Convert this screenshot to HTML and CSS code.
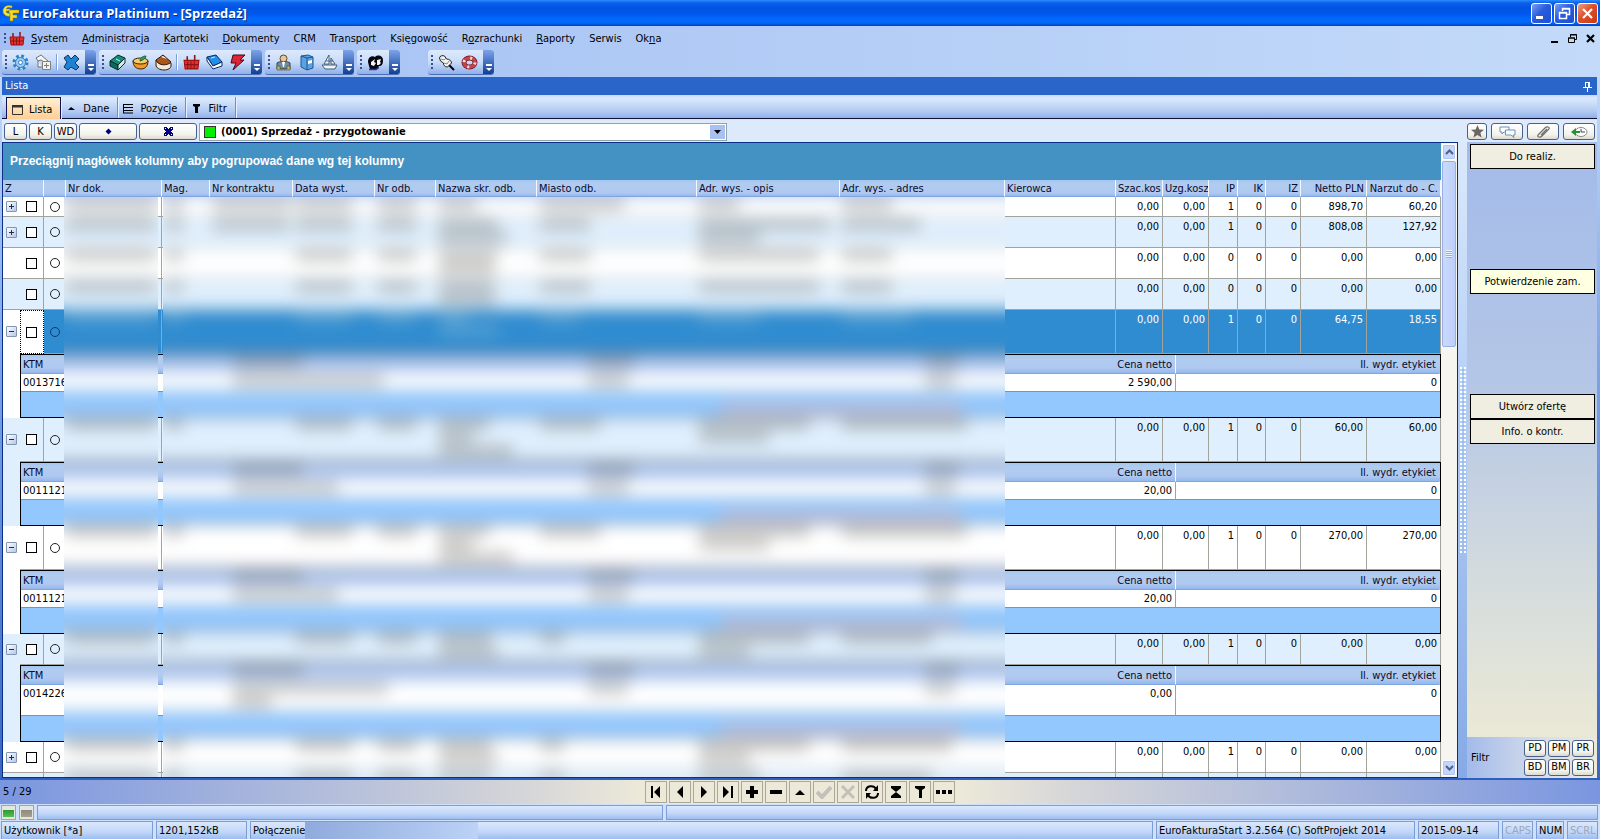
FILE: index.html
```html
<!DOCTYPE html>
<html lang="pl">
<head>
<meta charset="utf-8">
<title>EuroFaktura Platinium - [Sprzedaż]</title>
<link rel="stylesheet" href="styles.css">
</head>
<body>
<div class="app">
  <header class="titlebar">
    <svg class="logo" width="18" height="18" viewBox="0 0 18 18"><path d="M10 2C4 0 1 4 1 7s3 6 7 5v-3C5 10 4 8 4 7h4V5H4c1-2 3-2 6-1z" fill="#f4e53a" stroke="#a89a10" stroke-width=".6"/><path d="M7 6h10v3h-6v2h4v3h-4v3H8V9H7z" fill="#ffd91e" stroke="#8f8410" stroke-width=".6"/></svg>
    <h1>EuroFaktura Platinium - [Sprzedaż]</h1>
    <div class="win-buttons">
      <button class="win" aria-label="Minimalizuj"><svg width="19" height="19"><path d="M4 12h7v3H4z" fill="#fff"/></svg></button>
      <button class="win" aria-label="Przywróć"><svg width="19" height="19"><path d="M7.500 7V4.500h7v6H12M7 5h8M4.500 8.500h7v6h-7zM4 9h8" fill="none" stroke="#fff" stroke-width="1.500"/></svg></button>
      <button class="win close" aria-label="Zamknij"><svg width="19" height="19"><path d="M5 5l9 9M14 5l-9 9" stroke="#fff" stroke-width="2.200"/></svg></button>
    </div>
  </header>

  <div class="bars">
    <nav class="menubar">
      <span class="grip"></span>
      <svg class="ico" width="16" height="16"><use href="#i-basket"/></svg>
      <a href="#"><u>S</u>ystem</a><a href="#"><u>A</u>dministracja</a><a href="#"><u>K</u>artoteki</a><a href="#"><u>D</u>okumenty</a><a href="#">CRM</a><a href="#">Transport</a><a href="#">Księ<u>g</u>owość</a><a href="#">R<u>o</u>zrachunki</a><a href="#"><u>R</u>aporty</a><a href="#">Serwis</a><a href="#">Ok<u>n</u>a</a>
      <div class="mdi">
        <button aria-label="Minimalizuj okno"><svg width="11" height="11"><path d="M2 8h7v2H2z"/></svg></button>
        <button aria-label="Przywróć okno"><svg width="11" height="11"><path d="M3.500 4V1.500h6v5H8M3 2h7M1.500 5v4.500h6V5zM1 5h7" fill="none" stroke="#000"/></svg></button>
        <button aria-label="Zamknij okno"><svg width="11" height="11"><path d="M2 2l7 7M9 2L2 9" stroke="#000" stroke-width="2.200"/></svg></button>
      </div>
    </nav>

    <div class="toolbars">
      <div class="toolbar">
        <span class="grip"></span>
        <button aria-label="Ustawienia"><svg width="17" height="17"><circle cx="8.500" cy="8.500" r="6.500" fill="#bfe0fb" stroke="#2f7fc8" stroke-width="3" stroke-dasharray="2.600 2.500"/><circle cx="8.500" cy="8.500" r="5" fill="#9accf4" stroke="#2f7fc8"/><circle cx="8.500" cy="8.500" r="2" fill="#fff" stroke="#2f7fc8"/></svg></button>
        <button aria-label="Moduły"><svg width="17" height="17"><path d="M1 4l5-3 7 6-2 2-5-3-3 1zM3 7v6h4" fill="#f4f4f4" stroke="#68737c"/><path d="M7.500 7.500h8v8h-8z" fill="#f6f4ea" stroke="#7a7f84"/><path d="M11.500 9v5M9 11.500h5" stroke="#7a7f84"/></svg></button>
        <span class="sep"></span>
        <button aria-label="Zamknij listę"><svg width="17" height="17"><path d="M1 4l4-3 3 4 4-4 4 4-4 4 4 4-3 3-5-3-3 3-4-3 3-5z" fill="#1b84d6" stroke="#12305c"/></svg></button>
        <span class="cap"></span>
      </div>
      <div class="toolbar">
        <span class="grip"></span>
        <button aria-label="Księga"><svg width="17" height="17"><path d="M1 7l8-6 7 3-7 7z" fill="#17887a" stroke="#04322c"/><path d="M1 7v5l8 4V11z" fill="#0f6a5e" stroke="#04322c"/><path d="M9 16l7-7V4l-7 7z" fill="#d8e8e0" stroke="#04322c"/><path d="M7 5l4 2" stroke="#bfe"/></svg></button>
        <button aria-label="Towary"><svg width="17" height="17"><path d="M1 7c0 5 3 8 8 8s7-4 7-8z" fill="#f09a28" stroke="#3a2200"/><ellipse cx="8.500" cy="7" rx="7.500" ry="3" fill="#f7c968" stroke="#3a2200"/><path d="M8 7c0-4 4-5 6-5-1 3-3 4-6 5z" fill="#3ea03e" stroke="#163"/></svg></button>
        <button aria-label="Magazyn"><svg width="17" height="17"><path d="M1 6v5c0 3 4 5 8 5s7-2 7-4V9z" fill="#f5ead6" stroke="#2b1a0c"/><path d="M1 6l7-5 8 7c-3 4-13 4-15-2z" fill="#a8581c" stroke="#2b1a0c"/><path d="M6 3l2-1 4 3z" fill="#fff"/></svg></button>
        <span class="sep"></span>
        <button aria-label="Sprzedaż"><svg width="17" height="17"><use href="#i-basket"/></svg></button>
        <button aria-label="Zakupy"><svg width="17" height="17"><path d="M1 3l9-2 6 7-9 4z" fill="#1f8fe8" stroke="#08286a"/><path d="M1 3v4l6 8 9-3V8l-9 4z" fill="#fff" stroke="#08286a"/><path d="M5 4l4-1" stroke="#cdf"/></svg></button>
        <button aria-label="Szybkie akcje"><svg width="17" height="17"><path d="M4 1h12l-5 5h4L4 16l3-7H2z" fill="#e02236" stroke="#3c0a20"/></svg></button>
        <span class="cap"></span>
      </div>
      <div class="toolbar">
        <span class="grip"></span>
        <button aria-label="Kontrahenci"><svg width="17" height="17"><path d="M2 15V9c2-2 11-2 13 0v6z" fill="#6a8fa8" stroke="#33414c"/><path d="M2 12h3v3h7v-3h3v4H2z" fill="#c8b46c" stroke="#5d532c" stroke-width=".7"/><circle cx="8.500" cy="4.500" r="3.500" fill="#e8c79c" stroke="#5b4a36"/><path d="M7 8h3l-1 5H8z" fill="#fff"/></svg></button>
        <button aria-label="Kartoteka"><svg width="17" height="17"><path d="M3 2l7-1 5 2v11l-6 2-6-3z" fill="#5aa2e0" stroke="#1c5792"/><path d="M3 2l6 2v12M9 4l6-1" fill="none" stroke="#1c5792"/><path d="M10 7l4-1v3l-4 1z" fill="#fff"/></svg></button>
        <button aria-label="Spedycja"><svg width="17" height="17"><path d="M1 11h15l-2 4H4z" fill="#eef4fa" stroke="#3f5f78"/><path d="M8 1v9H3zM10 4v6h4z" fill="#fff" stroke="#4b5f70"/><path d="M5 7h7" stroke="#2b6aa8"/></svg></button>
        <span class="cap"></span>
      </div>
      <div class="toolbar">
        <span class="grip"></span>
        <button aria-label="Pracownicy"><svg width="17" height="17"><path d="M1 8c0-5 4-7 7-5 3-3 8-1 8 3 0 4-1 6-4 6l-2 3H3l-1-3z" fill="#05070f"/><path d="M4 8l4-3-1 3 2 1-2 3-3-1zM10 6l4-1-1 3 1 1-2 2h-2z" fill="#f4f4f4"/><path d="M2 15.500h7l3-2" stroke="#2233a8" stroke-width="1.500" fill="none"/></svg></button>
        <span class="cap"></span>
      </div>
      <div class="toolbar detached">
        <span class="grip"></span>
        <button aria-label="Przypnij"><svg width="17" height="17"><path d="M10 10l6 6" stroke="#000" stroke-width="2"/><path d="M1.500 4c0-2 3-3 5-2l2 3c3 0 5 2 5 4l-4 4c-3 0-4-2-4-4L2.500 7z" fill="#f4f4f0" stroke="#222"/><path d="M3 5l3 1 2-2M6 9l3 1 2-3" stroke="#888" fill="none"/></svg></button>
        <button aria-label="Pomoc"><svg width="17" height="17"><ellipse cx="8.500" cy="8.500" rx="5.500" ry="4.500" fill="none" stroke="#6a1c24" stroke-width="5"/><ellipse cx="8.500" cy="8.500" rx="5.500" ry="4.500" fill="none" stroke="#c9414c" stroke-width="3.500"/><ellipse cx="8.500" cy="8.500" rx="5.500" ry="4.500" fill="none" stroke="#f8d8d8" stroke-width="3" stroke-dasharray="2 5.900"/></svg></button>
        <span class="cap"></span>
      </div>
    </div>
  </div>

  <div class="frame">
    <div class="panel-title"><span>Lista</span>
      <button aria-label="Przypnij panel"><svg width="9" height="11"><path d="M2.500 1v5M6.500 1v5M2 1.500h5M5.500 1v5M0 6.500h9M4.500 7v4" stroke="#fff" fill="none"/></svg></button>
    </div>

    <nav class="tabs">
      <button class="tab active"><svg width="11" height="11"><path d="M.5 1.500h10v9H.5z" fill="none" stroke="#333"/><path d="M0 1h11v2.500H0z" fill="#333"/></svg>Lista</button>
      <button class="tab"><svg width="11" height="11"><path d="M2 7l3-3 4 3z"/></svg>Dane</button>
      <button class="tab"><svg width="11" height="11"><path d="M0 1.500h10M0 4.500h10M0 7.500h10M0 10h10M.5 1v9" stroke="#000"/></svg>Pozycje</button>
      <button class="tab"><svg width="11" height="11"><path d="M2 1h7v2L7 4v6H4V4L2 3z"/></svg>Filtr</button>
    </nav>

    <div class="controls">
      <button class="pill small">L</button><button class="pill small">K</button><button class="pill small">WD</button>
      <button class="pill wide" aria-label="Punkt"><svg width="9" height="9"><path d="M4.500 1.500l3 3-3 3-3-3z" fill="#00007c"/></svg></button>
      <button class="pill wide" aria-label="Rozwiń"><svg width="11" height="11" shape-rendering="crispEdges"><path d="M1 1h3v1h1v1h1V2h1V1h3v3H9v1H8v1h1v1h1v3H7V9H6V8H5v1H4v1H1V7h1V6h1V5H2V4H1z" fill="#00007c"/><path d="M2 2h1v1H2zM8 2h1v1H8zM2 8h1v1H2zM8 8h1v1H8z" fill="#fff"/></svg></button>
      <label class="combo"><span class="swatch"></span>
        <select aria-label="Rejestr"><option>(0001) Sprzedaż - przygotowanie</option></select>
        <span class="drop"><svg width="7" height="4"><path d="M0 0h7L3.500 4z"/></svg></span>
      </label>
      <div class="side-tools">
        <button class="pill star" aria-label="Ulubione"><svg width="13" height="13"><path d="M6.500 0l1.800 4.400 4.700.3-3.600 3 1.200 4.800-4.100-2.600-4.100 2.600 1.200-4.800L0 4.700l4.700-.3z" fill="#6b6663"/></svg></button>
        <button class="pill" aria-label="Komentarze"><svg width="17" height="12"><path d="M1 1h9v5H5L3 8V6H1z" fill="#fff" stroke="#6d8fc0"/><path d="M6.500 4h9.500v5h-2l1 2.500L12 9H6.500z" fill="#fff" stroke="#6d8fc0"/></svg></button>
        <button class="pill" aria-label="Załączniki"><svg width="15" height="12"><path d="M2 9l7-7c2-2 5-1 4 1l-7 7c-2 2-5 1-4-1zM5 9l6-6" fill="none" stroke="#6d6d6d" stroke-width="1.200"/></svg></button>
        <button class="pill" aria-label="Historia"><svg width="17" height="12"><ellipse cx="10" cy="6" rx="6" ry="4.500" fill="#fff" stroke="#8a8a8a"/><path d="M10 3v3h4" fill="none" stroke="#444"/><path d="M0 6l5-4v3h4v2H5v3z" fill="#1e9632"/></svg></button>
      </div>
    </div>

    <main class="work">
      <section class="grid">
        <div class="grid-main">
          <div class="group-panel">Przeciągnij nagłówek kolumny aby pogrupować dane wg tej kolumny</div>
          <div class="grid-scroll">
            <table class="data" id="orders">
              <colgroup><col class="w17"><col class="w24"><col class="w22"><col class="w96"><col class="w48"><col class="w83"><col class="w82"><col class="w61"><col class="w101"><col><col class="w143"><col class="w165"><col class="w111"><col class="w47"><col class="w46"><col class="w29"><col class="w28"><col class="w35"><col class="w66"><col class="w74"></colgroup>
              <thead><tr><th colspan="2">Z</th><th></th><th>Nr dok.</th><th>Mag.</th><th>Nr kontraktu</th><th>Data wyst.</th><th>Nr odb.</th><th>Nazwa skr. odb.</th><th>Miasto odb.</th><th>Adr. wys. - opis</th><th>Adr. wys. - adres</th><th>Kierowca</th><th class="n">Szac.kos</th><th>Uzg.kosz</th><th class="n">IP</th><th class="n">IK</th><th class="n">IZ</th><th class="n">Netto PLN</th><th class="n">Narzut do - C.</th></tr></thead>
              <tbody></tbody>
            </table>
            <div class="veil veil-doc" aria-hidden="true"><div class="smear"></div></div>
            <div class="veil veil-rest" aria-hidden="true"><div class="smear"></div></div>
          </div>
        </div>
        <div class="scrollbar">
          <button aria-label="W górę"><svg width="9" height="6"><path d="M1 5l3.500-3.500L8 5" fill="none" stroke="#4d6185" stroke-width="2"/></svg></button>
          <div class="track"><div class="thumb"><span></span></div></div>
          <button aria-label="W dół"><svg width="9" height="6"><path d="M1 1l3.500 3.500L8 1" fill="none" stroke="#4d6185" stroke-width="2"/></svg></button>
        </div>
      </section>
      <div class="splitter"><span></span></div>
      <aside class="side">
        <div class="actions">
          <button>Do realiz.</button>
          <button class="hot">Potwierdzenie zam.</button>
          <button class="offer">Utwórz ofertę</button>
          <button class="info">Info. o kontr.</button>
        </div>
        <div class="filters"><span>Filtr</span>
          <div class="filter-keys"><button class="pill">PD</button><button class="pill">PM</button><button class="pill">PR</button><button class="pill">BD</button><button class="pill">BM</button><button class="pill">BR</button></div>
        </div>
      </aside>
    </main>
  </div>

  <div class="navigator">
    <span class="count">5 / 29</span>
    <div class="nav-keys">
      <button aria-label="Pierwszy"><svg width="14" height="14"><path d="M2 1h2v12H2zM11 1v12L5 7z"/></svg></button>
      <button aria-label="Poprzedni"><svg width="14" height="14"><path d="M10 1v12L4 7z"/></svg></button>
      <button aria-label="Następny"><svg width="14" height="14"><path d="M4 1v12l6-6z"/></svg></button>
      <button aria-label="Ostatni"><svg width="14" height="14"><path d="M10 1h2v12h-2zM2 1v12l6-6z"/></svg></button>
      <button aria-label="Dodaj"><svg width="14" height="14"><path d="M5 1h4v4h4v4H9v4H5V9H1V5h4z"/></svg></button>
      <button aria-label="Usuń"><svg width="14" height="14"><path d="M1 5h12v4H1z"/></svg></button>
      <button aria-label="Edytuj"><svg width="14" height="14"><path d="M2 10l5-5 5 5z"/></svg></button>
      <button aria-label="Zatwierdź" disabled><svg width="16" height="14"><path d="M1 7l5 5L15 2" fill="none" stroke="#c2c0b8" stroke-width="4"/></svg></button>
      <button aria-label="Anuluj" disabled><svg width="14" height="14"><path d="M1 1l12 12M13 1L1 13" stroke="#c2c0b8" stroke-width="3"/></svg></button>
      <button aria-label="Odśwież"><svg width="16" height="16"><path d="M2 7c0-6 8-6 10-2M14 9c0 6-8 6-10 2" fill="none" stroke="#000" stroke-width="2"/><path d="M14 1v6H9zM2 15V9h5z"/></svg></button>
      <button aria-label="Suma"><svg width="14" height="14"><path d="M2 1h10v2L7 7 2 3zM7 7l5 4v2H2v-2z"/></svg></button>
      <button aria-label="Filtruj"><svg width="14" height="14"><path d="M2 1h10v2L9 5v8H6V5L2 3z"/></svg></button>
      <button aria-label="Więcej"><svg width="16" height="14"><path d="M0 5h4v4H0zM6 5h4v4H6zM12 5h4v4h-4z"/></svg></button>
    </div>
  </div>

  <div class="progress">
    <span class="led on"></span><span class="led"></span><span class="cell p1"></span><span class="cell grow"></span>
  </div>
  <footer class="status">
    <span class="cell s1">Użytkownik [*a]</span><span class="cell s2">1201,152kB</span><span class="cell grow">Połączenie<i class="masked"></i></span><span class="cell s4">EuroFakturaStart 3.2.564 (C) SoftProjekt 2014</span><span class="cell s5">2015-09-14</span><span class="cell off s6">CAPS</span><span class="cell s7">NUM</span><span class="cell off s6">SCRL</span>
  </footer>
</div>

<svg class="defs" width="0" height="0"><symbol id="i-basket" viewBox="0 0 16 16"><path d="M4 7V2M11 7V1" stroke="#8c1414" stroke-width="1.500"/><path d="M1 6h14l-1 8H2z" fill="#e03030" stroke="#a01010"/><path d="M4.500 7v7M7.500 7v7M10.500 7v7M2 10h12" stroke="#8c1414"/></symbol></svg>
<script src="app.js"></script>
</body>
</html>
```

FILE: styles.css
```css
* { box-sizing: border-box; }

body {
  margin: 0;
  font: 11px/14px "DejaVu Sans Condensed", Tahoma, "Noto Sans", sans-serif;
  color: #000;
}

button {
  font: inherit;
  color: inherit;
  margin: 0;
  padding: 0;
  border: 0;
  background: none;
  display: flex;
  align-items: center;
  justify-content: center;
  white-space: nowrap;
}

svg { display: block; flex: none; }
.defs { position: absolute; }

.app {
  height: 100vh;
  display: flex;
  flex-direction: column;
  overflow: hidden;
  background: #c3daf9;
}

/* title bar */
.titlebar {
  flex: none;
  height: 26px;
  display: flex;
  align-items: center;
  padding: 0 2px;
  background: linear-gradient(#2b8cff 0, #0b5fe8 3px, #0054e3 8px, #0058ee 14px, #026bff 20px, #0066f5 23px, #0040c0 26px);
}
.logo { margin-right: 2px; }
.titlebar h1 {
  margin: 0;
  flex: 1;
  font: bold 13px/20px "Open Sans", "Trebuchet MS", sans-serif;
  color: #fff;
  text-shadow: 1px 1px 0 #0a2a80;
}
.win-buttons { display: flex; gap: 2px; }
.win {
  width: 21px;
  height: 21px;
  border: 1px solid #fff;
  border-radius: 3px;
  background: linear-gradient(135deg, #7ba0f4, #2a5bdc 45%, #1d4fd6);
}
.win.close { background: linear-gradient(135deg, #f0a08a, #dd4f2a 45%, #c43a14); }

/* menu and toolbars */
.bars { flex: none; background: linear-gradient(90deg, #a3bff3, #c3daf9); }
.menubar { height: 24px; display: flex; align-items: center; padding: 1px 4px 0; }
.menubar a { color: #000; text-decoration: none; margin-left: 14px; }
.menubar .ico { margin-left: 2px; }
.menubar .ico + a { margin-left: 6px; }
.mdi { margin-left: auto; display: flex; gap: 7px; }
.grip {
  flex: none;
  width: 3px;
  height: 15px;
  background: repeating-linear-gradient(#33528f 0 2px, transparent 2px 4px);
  background-size: 2px 100%;
  background-repeat: no-repeat;
}
.menubar .grip { height: 11px; }
.toolbars { display: flex; gap: 3px; height: 27px; padding: 0 3px 2px 2px; }
.toolbar {
  display: flex;
  align-items: center;
  padding-left: 3px;
  border-radius: 3px;
  background: linear-gradient(#dde9fc, #c9dcf8 50%, #8fb0e8);
  border-bottom: 1px solid #4a6fb8;
}
.toolbar.detached { margin-left: 25px; }
.toolbar .grip { margin-right: 1px; }
.toolbar button { width: 23px; height: 22px; }
.sep { width: 2px; height: 16px; margin: 0 2px 0 1px; background: #7d9fd8; border-right: 1px solid #fff; }
.cap {
  align-self: stretch;
  width: 11px;
  margin-left: 2px;
  border-radius: 0 3px 3px 0;
  background: linear-gradient(#7ba4ea, #123e94);
  display: flex;
  flex-direction: column;
  align-items: center;
  justify-content: flex-end;
  padding-bottom: 3px;
}
.cap::before { content: ""; width: 6px; height: 2px; background: #fff; margin-bottom: 2px; }
.cap::after { content: ""; border: 3px solid transparent; border-top-color: #fff; border-bottom: 0; }

/* document frame */
.frame {
  flex: 1;
  min-height: 0;
  display: flex;
  flex-direction: column;
  padding: 0 3px 0 2px;
  border-bottom: 2px solid #2c5fc0;
  background: linear-gradient(#c3daf9, #7ea5ea 40%, #3b66c4);
}
.panel-title {
  flex: none;
  height: 18px;
  display: flex;
  align-items: center;
  justify-content: space-between;
  padding: 0 5px 0 3px;
  background: #2a66c9;
  color: #fff;
}
.tabs {
  flex: none;
  height: 24px;
  display: flex;
  align-items: flex-end;
  padding-left: 4px;
  border-bottom: 1px solid #101030;
  background: linear-gradient(#c3daf9, #dbe9fd 3px, #b4cbf2 16px, #8fb1ea);
}
.tab {
  height: 21px;
  gap: 6px;
  padding: 2px 8px 0 5px;
  border-right: 1px solid #6e8fce;
  box-shadow: 1px 0 #e8f1ff;
}
.tab.active {
  border: 1px solid #101050;
  border-bottom: 0;
  background: linear-gradient(#fff0d4, #ffcf95);
  margin-bottom: -1px;
  height: 22px;
}
.controls {
  flex: none;
  height: 23px;
  display: flex;
  align-items: center;
  gap: 2px;
  padding: 1px 2px 0;
  border-top: 1px solid #f6dcd2;
  background: #dceafb;
}
.pill {
  height: 17px;
  border: 1px solid #47618a;
  border-radius: 3px;
  background: linear-gradient(#fff, #f3f3ec 70%, #dcdad0);
}
.pill.small { width: 23px; }
.pill.wide { width: 58px; }
.combo {
  flex: 0 1 528px;
  height: 18px;
  display: flex;
  align-items: center;
  padding: 1px 1px 1px 4px;
  border: 1px solid #8fa5a5;
  background: #fff;
}
.swatch { width: 12px; height: 12px; border: 1px solid #333; background: #00f000; }
.combo select {
  appearance: none;
  flex: 1;
  min-width: 0;
  border: 0;
  padding: 0 0 0 5px;
  background: none;
  font: bold 11px/14px "DejaVu Sans Condensed", Tahoma, "Noto Sans", sans-serif;
  color: #000;
}
.drop {
  width: 15px;
  height: 14px;
  display: flex;
  align-items: center;
  justify-content: center;
  background: #a9c1f0;
}
.side-tools { margin-left: auto; display: flex; gap: 4px; }
.side-tools .pill { width: 32px; }
.side-tools .star { width: 20px; }

/* work area */
.work { flex: 1; min-height: 0; display: flex; }
.grid {
  flex: 1;
  min-width: 0;
  display: flex;
  border: 1px solid #0a2f86;
  background: #fff;
}
.grid-main { flex: 1; min-width: 0; display: flex; flex-direction: column; }
.group-panel {
  flex: none;
  height: 37px;
  padding: 0 7px;
  background: #4492c4;
  color: #fff;
  font: bold 12px/37px "Liberation Sans", Arial, sans-serif;
}
.grid-scroll { position: relative; flex: 1; min-height: 0; overflow: hidden; }
table { border-collapse: separate; border-spacing: 0; table-layout: fixed; width: 100%; }
th, td {
  padding: 1px 2px 0;
  vertical-align: top;
  text-align: left;
  font-weight: normal;
  line-height: 18px;
  white-space: nowrap;
  overflow: hidden;
}
.n { text-align: right; }
.w17 { width: 17px; } .w22 { width: 22px; } .w24 { width: 24px; } .w28 { width: 28px; }
.w29 { width: 29px; } .w35 { width: 35px; } .w46 { width: 46px; } .w47 { width: 47px; }
.w48 { width: 48px; } .w61 { width: 61px; } .w66 { width: 66px; } .w74 { width: 74px; }
.w82 { width: 82px; } .w83 { width: 83px; } .w96 { width: 96px; } .w101 { width: 101px; }
.w111 { width: 111px; } .w143 { width: 143px; } .w165 { width: 165px; }
.w172 { width: 172px; } .w264 { width: 264px; }

th {
  border-right: 1px solid #f4f8ff;
  border-bottom: 1px solid #7fa4de;
  background: linear-gradient(#a6c6ee, #b0ccf0 4px, #b0c8f0 13px, #93b9ee);
  color: #0a0a28;
}
.data > thead th { height: 17px; line-height: 15px; }
.data > tbody > tr > td { border-right: 1px solid #a2a49c; border-bottom: 1px solid #a2a49c; }
.data > tbody > tr > td.tree { border-right: 0; }
.data > tbody > tr > td.mid { vertical-align: middle; line-height: 0; padding-top: 0; }
.data > tbody > tr > .n { padding-right: 3px; }
.h20 { height: 20px; } .h31 { height: 31px; } .h44 { height: 44px; }
.alt { background: #dfeffd; }
.selected > td { background: #308cd0; color: #fff; }
.selected > td.tree { background: #fff; }
.data > tbody > tr.selected > td.pick { background: #fff; border: 1px dotted #000; }
.has-detail > td.tree { border-bottom-color: transparent !important; }

.tree { padding-left: 3px; }
.tree button {
  width: 11px;
  height: 11px;
  border: 1px solid #8296b4;
  border-radius: 1px;
  background: linear-gradient(135deg, #fff, #b4c8e8);
}
.pick input {
  appearance: none;
  display: block;
  width: 11px;
  height: 11px;
  margin: 0 0 0 4px;
  border: 1px solid #000;
  background: #fff;
}
.selected .pick input { margin-left: 3px; }
.state { display: block; width: 10px; height: 10px; margin-left: 4px; border: 1px solid #222; border-radius: 50%; }
.selected .state { border-color: #0a3a70; }

/* nested item table */
.data > tbody > tr.detail > td { padding: 0 0 0 17px; border: 0; line-height: 0; }
.items { border: 1px solid #000; }
.items th { height: 19px; line-height: 17px; }
.items td { height: 18px; line-height: 16px; background: #fff; border-bottom: 1px solid #8a9096; }
.items .tall td { height: 31px; }
.items .n { padding-right: 3px; }
.items th.plain { border-right-color: transparent; }
.items td.line { border-right: 1px solid #a2a49c; }
.items tfoot td { height: 25px; padding-top: 0; background: #93c8ff; border-bottom: 0; }

/* blurred cover over the personal data columns */
.veil { position: absolute; top: 17px; bottom: 0; overflow: hidden; }
.veil-doc { left: 61px; width: 94px; }
.veil-rest { left: 160px; right: 436px; }
.smear { margin: -17px -40px 0; filter: blur(8px); }
.band { display: grid; padding: 0 40px; align-content: start; background: #fff; border-bottom: 1px solid #a2a49c; }
.veil-doc .band { grid-template-columns: 1fr; }
.veil-rest .band { grid-template-columns: 48px 83px 82px 61px 101px 1fr 143px 165px; }
.veil-rest .band.sub { grid-template-columns: 68px 355px 1fr 82px; }
.band.alt { background: #dfeffd; }
.band.selected { background: #308cd0; }
.band.head { height: 19px; background: #b0c8f0; border-top: 1px solid #000; border-bottom: 0; }
.band.top { height: 17px; border: 0; }
.band.line { height: 18px; }
.band.line.tall { height: 31px; }
.band.foot { height: 26px; background: #93c8ff; border-bottom: 1px solid #000; }
.ink { display: block; height: 11px; margin: 2px 0 0 2px; background: rgba(100, 96, 92, .36); }
.selected .ink { background: rgba(190, 220, 220, .25); }
.sum { width: 240px; height: 14px; margin-top: 11px; background: #b4bede; justify-self: end; grid-column: 3 / 4; margin-right: -38px; }

.scrollbar {
  flex: none;
  width: 16px;
  display: flex;
  flex-direction: column;
  padding: 1px;
  background: #f6f5f0;
}
.scrollbar button { height: 16px; border-radius: 2px; border: 1px solid #fff; background: #c6d5fb; box-shadow: inset 0 0 0 1px #b2c6f4; }
.track { flex: 1; padding-top: 1px; }
.thumb {
  height: 31%;
  border: 1px solid #98b0e8;
  border-radius: 2px;
  background: linear-gradient(90deg, #cbd9fd, #bccffa);
  display: flex;
  align-items: center;
  justify-content: center;
}
.thumb span { width: 6px; height: 8px; background: repeating-linear-gradient(#eef4fe 0 1px, #8cb0f8 1px 2px); }

.splitter {
  flex: none;
  width: 9px;
  display: flex;
  align-items: center;
  justify-content: center;
  background: linear-gradient(#dceafb, #b4cff6 40%, #86aae6);
}
.splitter span {
  width: 6px;
  height: 186px;
  background: radial-gradient(circle at 1px 1px, #fff 1px, transparent 1px) 0 0 / 4px 4px,
              radial-gradient(circle at 1px 1px, #9db9e6 1px, transparent 1px) 2px 2px / 4px 4px;
}
.side { flex: none; width: 130px; display: flex; flex-direction: column; }
.actions {
  flex: 1;
  display: grid;
  grid-template-rows: repeat(12, 25px);
  padding: 2px 2px 0 3px;
  background: linear-gradient(#a3bbea, #b4c6e6 40%, #d8dedc 78%, #ebe9d6);
}
.actions button { border: 1px solid #000; background: #f0eee0; }
.actions .hot { grid-row: 6; background: #ffffe1; }
.actions .offer { grid-row: 11; }
.actions .info { grid-row: 12; }
.filters {
  flex: none;
  height: 41px;
  display: flex;
  align-items: center;
  justify-content: space-between;
  padding: 0 3px 0 4px;
  background: linear-gradient(90deg, #a3bbea, #d8deea 60%, #ece9d8);
}
.filter-keys { display: grid; grid-template-columns: repeat(3, 22px); gap: 2px; }

/* record navigator */
.navigator {
  flex: none;
  height: 24px;
  display: grid;
  grid-template-columns: 1fr auto 1fr;
  align-items: center;
  padding: 0 3px;
  background: linear-gradient(90deg, #7a96e0, #d6d6d8 33%, #ece9d8 40%, #ece9d8 60%, #d6d6d8 67%, #7a96e0);
}
.nav-keys { display: flex; gap: 2px; }
.nav-keys button { width: 22px; height: 22px; border: 1px solid #aca899; background: #ece9d8; }

/* status rows */
.progress, .status { flex: none; display: flex; gap: 3px; padding: 0 2px 0 1px; background: #cfe0fa; }
.progress { height: 17px; padding-top: 1px; padding-bottom: 1px; }
.status { height: 18px; }
.cell {
  border: 1px solid #7d9dd6;
  border-bottom: 0;
  background: linear-gradient(#dbe8fd, #c0d6f8 60%, #9dbcf0);
  padding: 0 2px;
  line-height: 18px;
  white-space: nowrap;
  overflow: hidden;
  display: flex;
}
.progress .cell { border-bottom: 1px solid #7d9dd6; }
.grow { flex: 1; }
.led {
  width: 15px;
  border: 1px solid #8aa6d8;
  background: linear-gradient(#8c8c7c, #a8a090) 50% 60% / 11px 7px no-repeat #e4e6e0;
}
.led.on { background-image: linear-gradient(#2f9a2f, #54c054); }
.p1 { width: 626px; }
.s1 { width: 152px; }
.s2 { width: 91px; }
.s4 { width: 259px; }
.s5 { width: 81px; }
.s6 { width: 31px; }
.s7 { width: 28px; }
.off { color: #9aa8bc; }
.masked { width: 173px; background: linear-gradient(90deg, #8fabdc, #a9c2ec 60%, #bcd2f6); }
```

FILE: app.js
```js
// Columns 3..11 hold personal data: each entry lists the line lengths of the masked text.
const rows = [
  { h: 20, box: "+", ink: [[90], [18], [78], [56], [38], [38], [84], [40], [50]], n: ["0,00", "0,00", 1, 0, 0, "898,70", "60,20"] },
  { h: 31, alt: true, box: "+", ink: [[90], [18], [76], [56], [38], [58, 68], [50], [130, 60], [78]], n: ["0,00", "0,00", 1, 0, 0, "808,08", "127,92"] },
  { h: 31, box: "", ink: [[90], [18], [], [56], [38], [58, 56], [50], [120], [50]], n: ["0,00", "0,00", 0, 0, 0, "0,00", "0,00"] },
  { h: 31, alt: true, box: "", ink: [[90], [18], [], [56], [38], [56, 56], [50], [120], [50]], n: ["0,00", "0,00", 0, 0, 0, "0,00", "0,00"] },
  { h: 44, selected: true, box: "−", ink: [[90], [18], [], [56], [38], [30, 60], [40], [60], [70]], n: ["0,00", "0,00", 1, 0, 0, "64,75", "18,55"],
    detail: { ktm: "0013716", price: "2 590,00", name: [150] } },
  { h: 44, alt: true, box: "−", ink: [[90], [18], [], [56], [38], [50, 34, 74], [60], [110, 70], [125]], n: ["0,00", "0,00", 1, 0, 0, "60,00", "60,00"],
    detail: { ktm: "0011121", price: "20,00", name: [105] } },
  { h: 44, box: "−", ink: [[90], [18], [], [56], [38], [50, 34, 74], [60], [110, 70], [125]], n: ["0,00", "0,00", 1, 0, 0, "270,00", "270,00"],
    detail: { ktm: "0011121", price: "20,00", name: [105] } },
  { h: 31, alt: true, box: "−", ink: [[90], [18], [], [56], [38], [52, 58], [24], [110, 50], [90]], n: ["0,00", "0,00", 1, 0, 0, "0,00", "0,00"],
    detail: { ktm: "0014226", price: "0,00", name: [155, 38], tall: true } },
  { h: 31, box: "+", ink: [[90], [18], [], [56], [38], [52, 58], [24], [110, 50], [110]], n: ["0,00", "0,00", 1, 0, 0, "0,00", "0,00"] },
  { h: 20, alt: true, box: "", ink: [[90], [18], [], [56], [38], [52], [24], [60], [90]], n: ["", "", "", "", "", "", ""] }
];

const signs = { "+": "M2 4.500h5M4.500 2v5", "−": "M2 4.500h5" };

function rowHtml(r, i) {
  const cls = [`h${r.h}`, r.alt && "alt", r.selected && "selected", r.detail && "has-detail"].filter(Boolean).join(" ");
  const box = r.box
    ? `<button aria-label="Szczegóły wiersza ${i + 1}"><svg width="9" height="9"><path d="${signs[r.box]}" stroke="#1a2c50"/></svg></button>`
    : "";
  return `<tr class="${cls}"><td class="tree mid">${box}</td>` +
    `<td class="pick mid"><input type="checkbox" aria-label="Zaznacz wiersz ${i + 1}"></td>` +
    `<td class="mid"><span class="state"></span></td>` +
    "<td></td>".repeat(10) +
    r.n.map(v => `<td class="n">${v}</td>`).join("") + `</tr>`;
}

function detailHtml(r) {
  const d = r.detail;
  return `<tr class="detail${r.alt ? " alt" : ""}"><td colspan="20"><table class="items">` +
    `<colgroup><col><col class="w172"><col class="w264"></colgroup>` +
    `<thead><tr><th class="plain">KTM</th><th class="n">Cena netto</th><th class="n plain">Il. wydr. etykiet</th></tr></thead>` +
    `<tbody><tr class="${d.tall ? "tall" : ""}"><td>${d.ktm}</td><td class="n line">${d.price}</td><td class="n">0</td></tr></tbody>` +
    `<tfoot><tr><td colspan="3"></td></tr></tfoot></table></td></tr>`;
}

document.querySelector("#orders > tbody").innerHTML =
  rows.map((r, i) => rowHtml(r, i) + (r.detail ? detailHtml(r) : "")).join("");

// The cover repeats the row bands and the text lines as plain blocks, then blurs them.
const lines = widths => `<div>${widths.map(w => `<i class="ink" style="width:${w}px"></i>`).join("")}</div>`;

function bands(doc) {
  return `<div class="band head top"></div>` + rows.map(r => {
    const cls = `band h${r.h}${r.alt ? " alt" : ""}${r.selected ? " selected" : ""}`;
    const own = (doc ? r.ink.slice(0, 1) : r.ink.slice(1)).map(lines).join("");
    let html = `<div class="${cls}">${own}</div>`;
    if (r.detail) {
      const sub = (a, b, c) => doc ? "" : `<div></div>${lines(a)}${lines(b)}${lines(c)}`;
      html += `<div class="band sub head">${sub([70], [46], [34])}</div>` +
        `<div class="band sub line${r.detail.tall ? " tall" : ""}">${sub(r.detail.name, [40], [30])}</div>` +
        `<div class="band sub foot">${doc ? "" : '<div class="sum"></div>'}</div>`;
    }
    return html;
  }).join("");
}

document.querySelector(".veil-doc .smear").innerHTML = bands(true);
document.querySelector(".veil-rest .smear").innerHTML = bands(false);
```
